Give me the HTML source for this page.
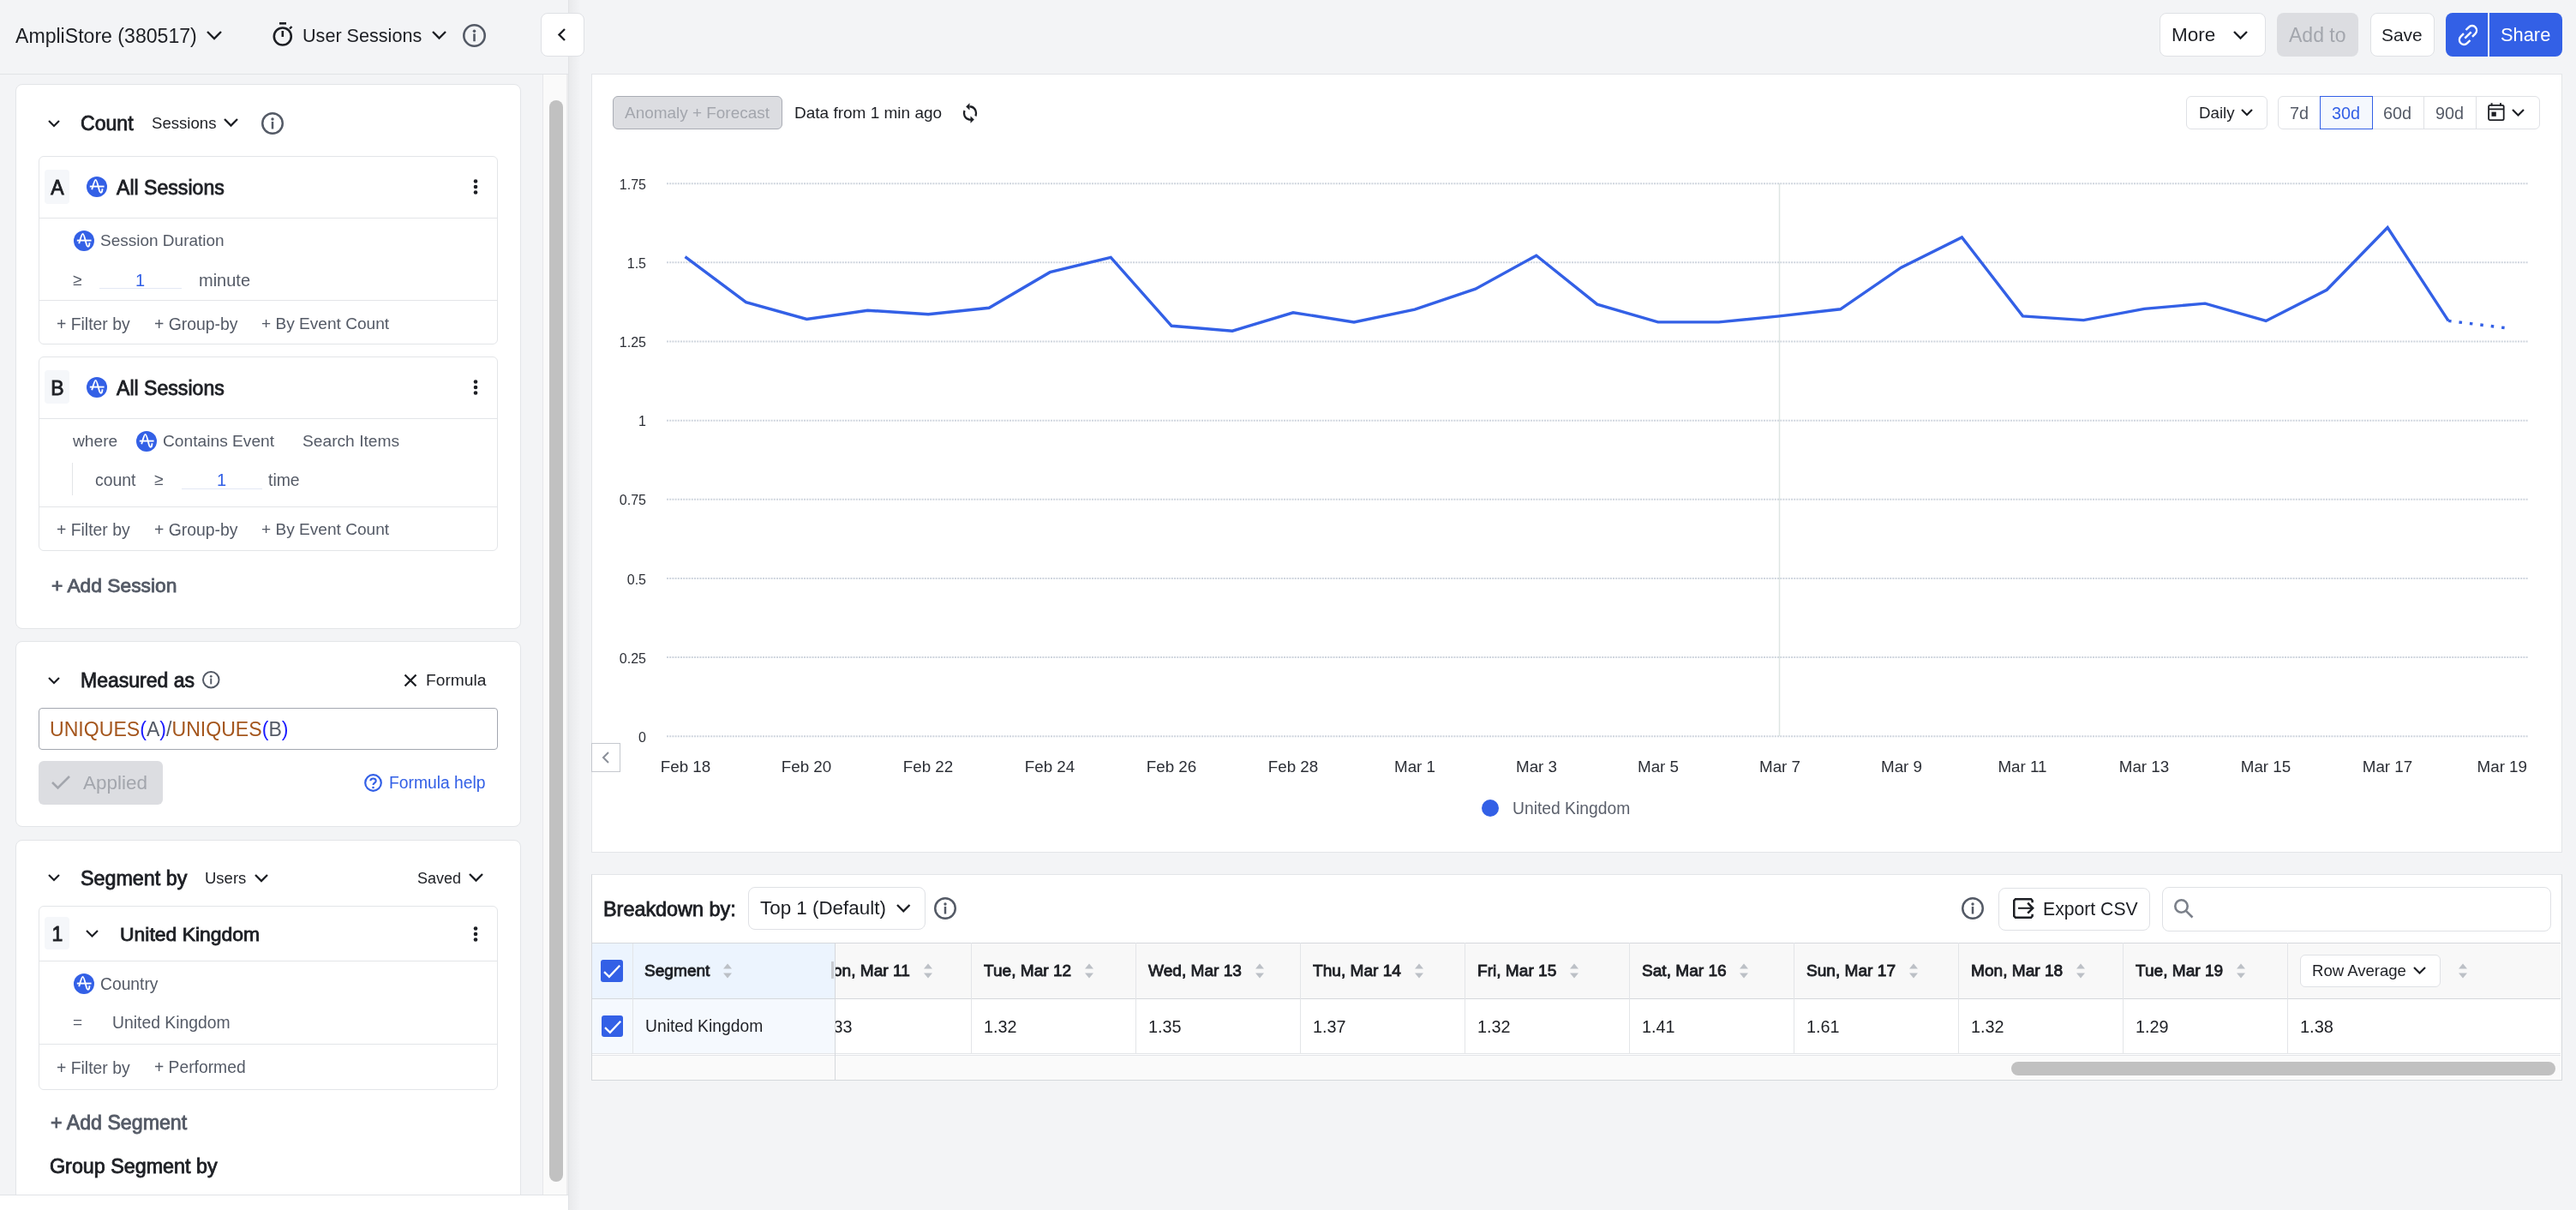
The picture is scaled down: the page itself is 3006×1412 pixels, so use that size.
<!DOCTYPE html>
<html><head><meta charset="utf-8">
<style>
html,body{margin:0;padding:0;}
body{width:3006px;height:1412px;overflow:hidden;background:#f3f4f6;font-family:"Liberation Sans",sans-serif;color:#1d1f24;position:relative;}
.a{position:absolute;}
.t{position:absolute;white-space:nowrap;line-height:40px;height:40px;will-change:transform;}
.ic{position:absolute;overflow:visible;}
</style></head><body>
<div class="a" style="left:0px;top:86px;width:663px;height:1px;background:#e1e3e6"></div>
<div class="t" style="left:18px;top:21.7px;font-size:23.1px;color:#1d1f24;">AmpliStore (380517)</div>
<svg class="ic" style="left:240px;top:35.0px" width="20" height="12.0" viewBox="0 0 20 12.0"><path d="M2 2 L10.0 10.0 L18 2" fill="none" stroke="#1d1f24" stroke-width="2.4" stroke-linecap="butt"/></svg>
<svg class="ic" style="left:318px;top:26px" width="25" height="29" viewBox="0 0 25 29"><rect x="8" y="0" width="8" height="2.6" fill="#1d1f24"/><circle cx="11.8" cy="16.5" r="10" fill="none" stroke="#1d1f24" stroke-width="2.6"/><path d="M11.8 10 V17" stroke="#1d1f24" stroke-width="2.6"/><path d="M20 7.5 L22.5 5" stroke="#1d1f24" stroke-width="2.4"/></svg>
<div class="t" style="left:353px;top:21.7px;font-size:21.6px;color:#1d1f24;">User Sessions</div>
<svg class="ic" style="left:503px;top:35.25px" width="19" height="11.5" viewBox="0 0 19 11.5"><path d="M2 2 L9.5 9.5 L17 2" fill="none" stroke="#1d1f24" stroke-width="2.4" stroke-linecap="butt"/></svg>
<svg class="ic" style="left:540px;top:27.5px" width="27" height="27" viewBox="0 0 27 27"><circle cx="13.5" cy="13.5" r="12.2175" fill="none" stroke="#545a66" stroke-width="2.565"/><circle cx="13.5" cy="8.37" r="1.7550000000000001" fill="#545a66"/><rect x="12.2175" y="11.34" width="2.565" height="8.91" fill="#545a66"/></svg>
<div class="a" style="left:633px;top:87px;width:30px;height:1307px;background:#fafafa;border-left:1px solid #e6e7ea;border-right:2px solid #ececee;box-sizing:border-box"></div>
<div class="a" style="left:641px;top:117px;width:16px;height:1262px;background:#c1c1c1;border-radius:8px"></div>
<div class="a" style="left:663px;top:0px;width:1px;height:1412px;background:#e1e3e6"></div>
<div class="a" style="left:664px;top:0;width:14px;height:1412px;background:linear-gradient(to right,rgba(0,0,0,0.045),rgba(0,0,0,0))"></div>
<div class="a" style="left:631px;top:15px;width:51px;height:51px;background:#fff;border:1px solid #dfe1e5;border-radius:8px;box-sizing:border-box;"></div>
<svg class="ic" style="left:648px;top:32px" width="16" height="18" viewBox="0 0 16 18"><path d="M11 2 L4.5 8.5 L11 15" fill="none" stroke="#1d1f24" stroke-width="2.4"/></svg>
<div class="a" style="left:18px;top:98px;width:590px;height:636px;background:#fff;border:1px solid #e3e5e8;border-radius:8px;box-sizing:border-box;"></div>
<svg class="ic" style="left:55px;top:138.5px" width="16" height="10.0" viewBox="0 0 16 10.0"><path d="M2 2 L8.0 8.0 L14 2" fill="none" stroke="#1d1f24" stroke-width="2.2" stroke-linecap="butt"/></svg>
<div class="t" style="left:94px;top:123.7px;font-size:23.1px;-webkit-text-stroke:0.85px #1d1f24;color:#1d1f24;">Count</div>
<div class="t" style="left:177px;top:123.7px;font-size:18.6px;color:#1d1f24;">Sessions</div>
<svg class="ic" style="left:260px;top:137.25px" width="19" height="11.5" viewBox="0 0 19 11.5"><path d="M2 2 L9.5 9.5 L17 2" fill="none" stroke="#1d1f24" stroke-width="2.4" stroke-linecap="butt"/></svg>
<svg class="ic" style="left:305px;top:131.0px" width="26" height="26" viewBox="0 0 26 26"><circle cx="13.0" cy="13.0" r="11.765" fill="none" stroke="#545a66" stroke-width="2.47"/><circle cx="13.0" cy="8.06" r="1.69" fill="#545a66"/><rect x="11.765" y="10.92" width="2.47" height="8.58" fill="#545a66"/></svg>
<div class="a" style="left:45px;top:182px;width:536px;height:220px;background:#fff;border:1px solid #e3e5e8;border-radius:6px;box-sizing:border-box;"></div>
<div class="a" style="left:52px;top:198px;width:29px;height:40px;background:#f5f7fa;border-radius:4px;box-sizing:border-box;"></div>
<div class="t" style="left:-83.5px;width:300px;text-align:center;top:198.7px;font-size:23px;-webkit-text-stroke:0.85px #1d1f24;color:#1d1f24;">A</div>
<svg class="ic" style="left:101px;top:206.0px" width="24" height="24" viewBox="0 0 24 24"><circle cx="12.0" cy="12.0" r="12.0" fill="#3360e6"/><g transform="scale(1.0)" fill="none" stroke="#fff" stroke-width="1.9" stroke-linecap="butt" stroke-linejoin="round"><path d="M6.2 15.2 C7.6 11 9.2 3.9 10.6 3.9 C12.1 3.9 13.6 12 15 16.5 C15.7 18.7 17.2 19.6 18 17.4 L18.6 14.2"/><path d="M3.8 11.6 H20.6"/></g></svg>
<div class="t" style="left:136px;top:198.7px;font-size:23.1px;-webkit-text-stroke:0.85px #1d1f24;color:#1d1f24;">All Sessions</div>
<svg class="ic" style="left:552px;top:209px" width="6" height="18" viewBox="0 0 6 18"><circle cx="3" cy="2.5" r="2.3" fill="#1d1f24"/><circle cx="3" cy="9" r="2.3" fill="#1d1f24"/><circle cx="3" cy="15.5" r="2.3" fill="#1d1f24"/></svg>
<div class="a" style="left:46px;top:254px;width:534px;height:1px;background:#e3e5e8"></div>
<svg class="ic" style="left:86px;top:268.5px" width="24" height="24" viewBox="0 0 24 24"><circle cx="12.0" cy="12.0" r="12.0" fill="#3360e6"/><g transform="scale(1.0)" fill="none" stroke="#fff" stroke-width="1.9" stroke-linecap="butt" stroke-linejoin="round"><path d="M6.2 15.2 C7.6 11 9.2 3.9 10.6 3.9 C12.1 3.9 13.6 12 15 16.5 C15.7 18.7 17.2 19.6 18 17.4 L18.6 14.2"/><path d="M3.8 11.6 H20.6"/></g></svg>
<div class="t" style="left:117px;top:261.2px;font-size:19px;color:#545a66;">Session Duration</div>
<div class="t" style="left:85px;top:306.7px;font-size:19px;color:#545a66;">≥</div>
<div class="t" style="left:158px;top:306.7px;font-size:20px;color:#3360e6;">1</div>
<div class="a" style="left:116px;top:336px;width:96px;height:1px;background:#e3e8f4"></div>
<div class="t" style="left:232px;top:306.7px;font-size:20px;color:#545a66;">minute</div>
<div class="a" style="left:46px;top:350px;width:534px;height:1px;background:#e3e5e8"></div>
<div class="t" style="left:66px;top:358.2px;font-size:19.4px;color:#545a66;">+ Filter by</div>
<div class="t" style="left:180px;top:358.2px;font-size:19.4px;color:#545a66;">+ Group-by</div>
<div class="t" style="left:305.4px;top:358.2px;font-size:19.1px;color:#545a66;">+ By Event Count</div>
<div class="a" style="left:45px;top:416px;width:536px;height:227px;background:#fff;border:1px solid #e3e5e8;border-radius:6px;box-sizing:border-box;"></div>
<div class="a" style="left:52px;top:432px;width:29px;height:39px;background:#f5f7fa;border-radius:4px;box-sizing:border-box;"></div>
<div class="t" style="left:-83.5px;width:300px;text-align:center;top:432.7px;font-size:23px;-webkit-text-stroke:0.85px #1d1f24;color:#1d1f24;">B</div>
<svg class="ic" style="left:101px;top:440.0px" width="24" height="24" viewBox="0 0 24 24"><circle cx="12.0" cy="12.0" r="12.0" fill="#3360e6"/><g transform="scale(1.0)" fill="none" stroke="#fff" stroke-width="1.9" stroke-linecap="butt" stroke-linejoin="round"><path d="M6.2 15.2 C7.6 11 9.2 3.9 10.6 3.9 C12.1 3.9 13.6 12 15 16.5 C15.7 18.7 17.2 19.6 18 17.4 L18.6 14.2"/><path d="M3.8 11.6 H20.6"/></g></svg>
<div class="t" style="left:136px;top:432.7px;font-size:23.1px;-webkit-text-stroke:0.85px #1d1f24;color:#1d1f24;">All Sessions</div>
<svg class="ic" style="left:552px;top:443px" width="6" height="18" viewBox="0 0 6 18"><circle cx="3" cy="2.5" r="2.3" fill="#1d1f24"/><circle cx="3" cy="9" r="2.3" fill="#1d1f24"/><circle cx="3" cy="15.5" r="2.3" fill="#1d1f24"/></svg>
<div class="a" style="left:46px;top:488px;width:534px;height:1px;background:#e3e5e8"></div>
<div class="t" style="left:84.7px;top:495.3px;font-size:19.2px;color:#545a66;">where</div>
<svg class="ic" style="left:159px;top:502.6px" width="24" height="24" viewBox="0 0 24 24"><circle cx="12.0" cy="12.0" r="12.0" fill="#3360e6"/><g transform="scale(1.0)" fill="none" stroke="#fff" stroke-width="1.9" stroke-linecap="butt" stroke-linejoin="round"><path d="M6.2 15.2 C7.6 11 9.2 3.9 10.6 3.9 C12.1 3.9 13.6 12 15 16.5 C15.7 18.7 17.2 19.6 18 17.4 L18.6 14.2"/><path d="M3.8 11.6 H20.6"/></g></svg>
<div class="t" style="left:190.3px;top:495.3px;font-size:19.2px;color:#545a66;">Contains Event</div>
<div class="t" style="left:353.3px;top:495.3px;font-size:19.2px;color:#545a66;">Search Items</div>
<div class="a" style="left:84px;top:540px;width:1px;height:38px;background:#e3e5e8"></div>
<div class="t" style="left:110.6px;top:540.2px;font-size:19.4px;color:#545a66;">count</div>
<div class="t" style="left:180px;top:540.2px;font-size:19px;color:#545a66;">≥</div>
<div class="t" style="left:253px;top:540.2px;font-size:20px;color:#3360e6;">1</div>
<div class="a" style="left:212px;top:570px;width:94px;height:1px;background:#e3e8f4"></div>
<div class="t" style="left:313.4px;top:540.2px;font-size:19.4px;color:#545a66;">time</div>
<div class="a" style="left:46px;top:591px;width:534px;height:1px;background:#e3e5e8"></div>
<div class="t" style="left:66px;top:598.4px;font-size:19.4px;color:#545a66;">+ Filter by</div>
<div class="t" style="left:180px;top:598.4px;font-size:19.4px;color:#545a66;">+ Group-by</div>
<div class="t" style="left:305.4px;top:598.4px;font-size:19.1px;color:#545a66;">+ By Event Count</div>
<div class="t" style="left:59.5px;top:663.0px;font-size:22.8px;-webkit-text-stroke:0.85px #545a66;color:#545a66;">+ Add Session</div>
<div class="a" style="left:18px;top:748px;width:590px;height:217px;background:#fff;border:1px solid #e3e5e8;border-radius:8px;box-sizing:border-box;"></div>
<svg class="ic" style="left:55px;top:788.5px" width="16" height="10.0" viewBox="0 0 16 10.0"><path d="M2 2 L8.0 8.0 L14 2" fill="none" stroke="#1d1f24" stroke-width="2.2" stroke-linecap="butt"/></svg>
<div class="t" style="left:93.8px;top:774.2px;font-size:23.0px;-webkit-text-stroke:0.85px #1d1f24;color:#1d1f24;">Measured as</div>
<svg class="ic" style="left:236.4px;top:783.25px" width="20.5" height="20.5" viewBox="0 0 20.5 20.5"><circle cx="10.25" cy="10.25" r="9.27625" fill="none" stroke="#545a66" stroke-width="1.9475"/><circle cx="10.25" cy="6.3549999999999995" r="1.3325" fill="#545a66"/><rect x="9.27625" y="8.61" width="1.9475" height="6.765000000000001" fill="#545a66"/></svg>
<svg class="ic" style="left:471px;top:786px" width="16" height="16" viewBox="0 0 16 16"><path d="M1.5 1.5 L14.5 14.5 M14.5 1.5 L1.5 14.5" stroke="#1d1f24" stroke-width="2.3"/></svg>
<div class="t" style="left:496.7px;top:774.2px;font-size:19.2px;color:#1d1f24;">Formula</div>
<div class="a" style="left:45px;top:825.5px;width:536px;height:49.0px;background:#fff;border:1px solid #a3a7b0;border-radius:4px;box-sizing:border-box;"></div>
<div class="t" style="left:58.4px;top:831.3px;font-size:23.1px;color:#1d1f24;"><span style="color:#a4561d">UNIQUES</span><span style="color:#1a1aff">(</span><span style="color:#545a66">A</span><span style="color:#1a1aff">)</span><span style="color:#545a66">/</span><span style="color:#a4561d">UNIQUES</span><span style="color:#1a1aff">(</span><span style="color:#545a66">B</span><span style="color:#1a1aff">)</span></div>
<div class="a" style="left:45px;top:888px;width:145px;height:51px;background:#dcdde1;border-radius:6px;box-sizing:border-box;"></div>
<svg class="ic" style="left:59px;top:904px" width="24" height="18" viewBox="0 0 24 18"><path d="M2 9 L8.5 15.5 L22 2" fill="none" stroke="#a3a6ad" stroke-width="2.6"/></svg>
<div class="t" style="left:97px;top:894.2px;font-size:22.5px;color:#a3a6ad;">Applied</div>
<svg class="ic" style="left:425px;top:903px" width="21" height="21" viewBox="0 0 21 21"><circle cx="10.5" cy="10.5" r="9.3" fill="none" stroke="#3360e6" stroke-width="2.2"/><path d="M7.3 8.3 C7.3 4.6 13.7 4.6 13.7 8.3 C13.7 10.6 10.5 10.8 10.5 13" fill="none" stroke="#3360e6" stroke-width="2.1"/><circle cx="10.5" cy="16" r="1.3" fill="#3360e6"/></svg>
<div class="t" style="left:454.3px;top:894.2px;font-size:19.3px;color:#3360e6;">Formula help</div>
<div class="a" style="left:18px;top:980px;width:590px;height:440px;background:#fff;border:1px solid #e3e5e8;border-radius:8px;box-sizing:border-box;"></div>
<svg class="ic" style="left:55px;top:1019.0px" width="16" height="10.0" viewBox="0 0 16 10.0"><path d="M2 2 L8.0 8.0 L14 2" fill="none" stroke="#1d1f24" stroke-width="2.2" stroke-linecap="butt"/></svg>
<div class="t" style="left:94px;top:1004.7px;font-size:23.3px;-webkit-text-stroke:0.85px #1d1f24;color:#1d1f24;">Segment by</div>
<div class="t" style="left:239.3px;top:1004.7px;font-size:18.5px;color:#1d1f24;">Users</div>
<svg class="ic" style="left:296px;top:1018.5px" width="18" height="11.0" viewBox="0 0 18 11.0"><path d="M2 2 L9.0 9.0 L16 2" fill="none" stroke="#1d1f24" stroke-width="2.4" stroke-linecap="butt"/></svg>
<div class="t" style="left:486.7px;top:1004.7px;font-size:18px;color:#1d1f24;">Saved</div>
<svg class="ic" style="left:546px;top:1018.25px" width="19" height="11.5" viewBox="0 0 19 11.5"><path d="M2 2 L9.5 9.5 L17 2" fill="none" stroke="#1d1f24" stroke-width="2.4" stroke-linecap="butt"/></svg>
<div class="a" style="left:45px;top:1056.5px;width:536px;height:215.5px;background:#fff;border:1px solid #e3e5e8;border-radius:6px;box-sizing:border-box;"></div>
<div class="a" style="left:52px;top:1069.5px;width:29px;height:38.5px;background:#f5f7fa;border-radius:4px;box-sizing:border-box;"></div>
<div class="t" style="left:-83.5px;width:300px;text-align:center;top:1070.2px;font-size:23px;-webkit-text-stroke:0.85px #1d1f24;color:#1d1f24;">1</div>
<svg class="ic" style="left:99px;top:1084.25px" width="17" height="10.5" viewBox="0 0 17 10.5"><path d="M2 2 L8.5 8.5 L15 2" fill="none" stroke="#1d1f24" stroke-width="2.2" stroke-linecap="butt"/></svg>
<div class="t" style="left:140px;top:1070.2px;font-size:22.95px;-webkit-text-stroke:0.85px #1d1f24;color:#1d1f24;">United Kingdom</div>
<svg class="ic" style="left:551.6px;top:1080.5px" width="6" height="18" viewBox="0 0 6 18"><circle cx="3" cy="2.5" r="2.3" fill="#1d1f24"/><circle cx="3" cy="9" r="2.3" fill="#1d1f24"/><circle cx="3" cy="15.5" r="2.3" fill="#1d1f24"/></svg>
<div class="a" style="left:46px;top:1121px;width:534px;height:1px;background:#e3e5e8"></div>
<svg class="ic" style="left:86px;top:1136.0px" width="24" height="24" viewBox="0 0 24 24"><circle cx="12.0" cy="12.0" r="12.0" fill="#3360e6"/><g transform="scale(1.0)" fill="none" stroke="#fff" stroke-width="1.9" stroke-linecap="butt" stroke-linejoin="round"><path d="M6.2 15.2 C7.6 11 9.2 3.9 10.6 3.9 C12.1 3.9 13.6 12 15 16.5 C15.7 18.7 17.2 19.6 18 17.4 L18.6 14.2"/><path d="M3.8 11.6 H20.6"/></g></svg>
<div class="t" style="left:117px;top:1128.7px;font-size:19.3px;color:#545a66;">Country</div>
<div class="t" style="left:85px;top:1172.7px;font-size:19px;color:#545a66;">=</div>
<div class="t" style="left:130.8px;top:1172.7px;font-size:19.35px;color:#545a66;">United Kingdom</div>
<div class="a" style="left:46px;top:1218px;width:534px;height:1px;background:#e3e5e8"></div>
<div class="t" style="left:65.8px;top:1225.7px;font-size:19.4px;color:#545a66;">+ Filter by</div>
<div class="t" style="left:180px;top:1225.7px;font-size:19.3px;color:#545a66;">+ Performed</div>
<div class="t" style="left:58.5px;top:1289.7px;font-size:23.2px;-webkit-text-stroke:0.85px #545a66;color:#545a66;">+ Add Segment</div>
<div class="t" style="left:57.7px;top:1340.7px;font-size:23.3px;-webkit-text-stroke:0.85px #1d1f24;color:#1d1f24;">Group Segment by</div>
<div class="a" style="left:0;top:1394px;width:663px;height:18px;background:#fff;border-top:1px solid #e1e3e6;box-sizing:border-box"></div>
<div class="a" style="left:2519.5px;top:15px;width:124.0px;height:50.5px;background:#fff;border:1px solid #dfe1e5;border-radius:8px;box-sizing:border-box;"></div>
<div class="t" style="left:2533.7px;top:21.0px;font-size:22.5px;color:#1d1f24;">More</div>
<svg class="ic" style="left:2605px;top:35.25px" width="19" height="11.5" viewBox="0 0 19 11.5"><path d="M2 2 L9.5 9.5 L17 2" fill="none" stroke="#1d1f24" stroke-width="2.4" stroke-linecap="butt"/></svg>
<div class="a" style="left:2657px;top:15px;width:95px;height:50.5px;background:#dcdde1;border-radius:8px;box-sizing:border-box;"></div>
<div class="t" style="left:2671px;top:21.0px;font-size:23px;color:#a3a6ad;">Add to</div>
<div class="a" style="left:2765.5px;top:15px;width:75.0px;height:50.5px;background:#fff;border:1px solid #dfe1e5;border-radius:8px;box-sizing:border-box;"></div>
<div class="t" style="left:2779px;top:21.0px;font-size:20.9px;color:#1d1f24;">Save</div>
<div class="a" style="left:2854px;top:15px;width:136px;height:50.5px;background:#3360e6;border-radius:8px;box-sizing:border-box;"></div>
<div class="a" style="left:2903px;top:15px;width:2px;height:50.5px;background:#e8ebf5"></div>
<svg class="ic" style="left:2868px;top:29px" width="24" height="24" viewBox="0 0 24 24"><g fill="none" stroke="#fff" stroke-width="2.4"><path d="M9.5 6 L13 2.6 C15.2 0.4 18.6 0.6 20.6 2.8 C22.6 5 22.5 8.2 20.5 10.3 L17 13.8"/><path d="M14.5 18 L11 21.4 C8.8 23.6 5.4 23.4 3.4 21.2 C1.4 19 1.5 15.8 3.5 13.7 L7 10.2"/><path d="M8.3 15.7 L15.7 8.3"/></g></svg>
<div class="t" style="left:2918.4px;top:21.0px;font-size:21.85px;color:#fff;">Share</div>
<div class="a" style="left:690px;top:86px;width:2300px;height:909px;background:#fff;border:1px solid #e3e5e8;box-sizing:border-box"></div>
<div class="a" style="left:715px;top:112px;width:198px;height:39px;background:#dcdde1;border:1px solid #a9acb4;border-radius:6px;box-sizing:border-box;"></div>
<div class="t" style="left:729px;top:111.7px;font-size:18.95px;color:#a3a6ad;">Anomaly + Forecast</div>
<div class="t" style="left:926.5px;top:111.7px;font-size:19px;color:#1d1f24;">Data from 1 min ago</div>
<svg class="ic" style="left:1121px;top:119px" width="22" height="26" viewBox="0 0 22 26"><g fill="none" stroke="#1d1f24" stroke-width="2.3"><path d="M4.5 10 C3 14 4.5 19.5 10 20.5 L12 20.6"/><path d="M17.5 16.5 C19 12.5 17.5 6.5 12 5.5 L10.5 5.4"/></g><path d="M10.5 1.2 L6.2 5.4 L10.5 9.6 Z" fill="#1d1f24"/><path d="M11.5 16.4 L15.8 20.6 L11.5 24.8 Z" fill="#1d1f24"/></svg>
<div class="a" style="left:2551px;top:112px;width:95px;height:39px;background:#fff;border:1px solid #dfe1e5;border-radius:6px;box-sizing:border-box;"></div>
<div class="t" style="left:2566px;top:111.7px;font-size:18.7px;color:#1d1f24;">Daily</div>
<svg class="ic" style="left:2614px;top:126.0px" width="16" height="10.0" viewBox="0 0 16 10.0"><path d="M2 2 L8.0 8.0 L14 2" fill="none" stroke="#1d1f24" stroke-width="2.2" stroke-linecap="butt"/></svg>
<div class="a" style="left:2658px;top:112px;width:306px;height:39px;background:#fff;border:1px solid #dfe1e5;border-radius:6px;box-sizing:border-box;"></div>
<div class="a" style="left:2828px;top:113px;width:1px;height:37px;background:#dfe1e5"></div>
<div class="a" style="left:2888.5px;top:113px;width:1px;height:37px;background:#dfe1e5"></div>
<div class="a" style="left:2707px;top:112px;width:62px;height:39px;background:#f5f8fd;border:1px solid #3360e6;border-radius:0px;box-sizing:border-box;"></div>
<div class="t" style="left:2672px;top:111.7px;font-size:19.8px;color:#545a66;">7d</div>
<div class="t" style="left:2721px;top:111.7px;font-size:19.8px;color:#3360e6;">30d</div>
<div class="t" style="left:2781px;top:111.7px;font-size:19.8px;color:#545a66;">60d</div>
<div class="t" style="left:2841.8px;top:111.7px;font-size:19.8px;color:#545a66;">90d</div>
<svg class="ic" style="left:2903px;top:120px" width="20" height="22" viewBox="0 0 20 22"><g fill="none" stroke="#1d1f24"><rect x="1.1" y="2.8" width="17.6" height="17.4" rx="1.6" stroke-width="1.8"/><path d="M1 7.4 H19" stroke-width="1.8"/><path d="M4.6 0.3 V3.5 M15 0.3 V3.5" stroke-width="2"/></g><rect x="4.5" y="10.6" width="5.3" height="5.2" fill="#1d1f24"/></svg>
<svg class="ic" style="left:2930px;top:125.75px" width="17" height="10.5" viewBox="0 0 17 10.5"><path d="M2 2 L8.5 8.5 L15 2" fill="none" stroke="#1d1f24" stroke-width="2.2" stroke-linecap="butt"/></svg>
<div class="t" style="left:454px;width:300px;text-align:right;top:195.7px;font-size:16px;color:#2c2f36;">1.75</div>
<div class="t" style="left:454px;width:300px;text-align:right;top:287.9px;font-size:16px;color:#2c2f36;">1.5</div>
<div class="t" style="left:454px;width:300px;text-align:right;top:380.0px;font-size:16px;color:#2c2f36;">1.25</div>
<div class="t" style="left:454px;width:300px;text-align:right;top:472.2px;font-size:16px;color:#2c2f36;">1</div>
<div class="t" style="left:454px;width:300px;text-align:right;top:564.3px;font-size:16px;color:#2c2f36;">0.75</div>
<div class="t" style="left:454px;width:300px;text-align:right;top:656.5px;font-size:16px;color:#2c2f36;">0.5</div>
<div class="t" style="left:454px;width:300px;text-align:right;top:748.6px;font-size:16px;color:#2c2f36;">0.25</div>
<div class="t" style="left:454px;width:300px;text-align:right;top:840.7px;font-size:16px;color:#2c2f36;">0</div>
<svg class="ic" style="left:0;top:0" width="3006" height="1000" viewBox="0 0 3006 1000"><line x1="778" y1="214.20" x2="2950" y2="214.20" stroke="#cfd5de" stroke-width="2" stroke-dasharray="2 1.2"/><line x1="778" y1="306.35" x2="2950" y2="306.35" stroke="#cfd5de" stroke-width="2" stroke-dasharray="2 1.2"/><line x1="778" y1="398.50" x2="2950" y2="398.50" stroke="#cfd5de" stroke-width="2" stroke-dasharray="2 1.2"/><line x1="778" y1="490.65" x2="2950" y2="490.65" stroke="#cfd5de" stroke-width="2" stroke-dasharray="2 1.2"/><line x1="778" y1="582.80" x2="2950" y2="582.80" stroke="#cfd5de" stroke-width="2" stroke-dasharray="2 1.2"/><line x1="778" y1="674.95" x2="2950" y2="674.95" stroke="#cfd5de" stroke-width="2" stroke-dasharray="2 1.2"/><line x1="778" y1="767.10" x2="2950" y2="767.10" stroke="#cfd5de" stroke-width="2" stroke-dasharray="2 1.2"/><line x1="778" y1="859.25" x2="2950" y2="859.25" stroke="#cfd5de" stroke-width="2" stroke-dasharray="2 1.2"/><line x1="2076.5" y1="214" x2="2076.5" y2="859" stroke="#dde5e3" stroke-width="1.5"/><polyline points="799.5,299.7 870.5,352.7 941.4,372.5 1012.4,362.2 1083.3,366.7 1154.2,359.3 1225.2,317.7 1296.2,300.4 1367.1,380.3 1438.1,386.2 1509.0,364.8 1580.0,375.9 1650.9,361.1 1721.8,337.2 1792.8,298.2 1863.8,355.2 1934.7,375.9 2005.7,375.9 2076.6,368.9 2147.6,360.8 2218.5,312.2 2289.4,276.9 2360.4,368.9 2431.4,373.6 2502.3,360.4 2573.2,354.1 2644.2,374.4 2715.2,338.3 2786.1,265.5 2857.1,374.4" fill="none" stroke="#3360e6" stroke-width="3.4" stroke-linejoin="miter"/><polyline points="2857.1,374.4 2928.0,383.2" fill="none" stroke="#3360e6" stroke-width="3.4" stroke-dasharray="3.5 9"/></svg>
<div class="t" style="left:649.5px;width:300px;text-align:center;top:874.7px;font-size:18.8px;color:#2c2f36;">Feb 18</div>
<div class="t" style="left:791.4px;width:300px;text-align:center;top:874.7px;font-size:18.8px;color:#2c2f36;">Feb 20</div>
<div class="t" style="left:933.3px;width:300px;text-align:center;top:874.7px;font-size:18.8px;color:#2c2f36;">Feb 22</div>
<div class="t" style="left:1075.2px;width:300px;text-align:center;top:874.7px;font-size:18.8px;color:#2c2f36;">Feb 24</div>
<div class="t" style="left:1217.1px;width:300px;text-align:center;top:874.7px;font-size:18.8px;color:#2c2f36;">Feb 26</div>
<div class="t" style="left:1359.0px;width:300px;text-align:center;top:874.7px;font-size:18.8px;color:#2c2f36;">Feb 28</div>
<div class="t" style="left:1500.9px;width:300px;text-align:center;top:874.7px;font-size:18.8px;color:#2c2f36;">Mar 1</div>
<div class="t" style="left:1642.8000000000002px;width:300px;text-align:center;top:874.7px;font-size:18.8px;color:#2c2f36;">Mar 3</div>
<div class="t" style="left:1784.7px;width:300px;text-align:center;top:874.7px;font-size:18.8px;color:#2c2f36;">Mar 5</div>
<div class="t" style="left:1926.6000000000004px;width:300px;text-align:center;top:874.7px;font-size:18.8px;color:#2c2f36;">Mar 7</div>
<div class="t" style="left:2068.5px;width:300px;text-align:center;top:874.7px;font-size:18.8px;color:#2c2f36;">Mar 9</div>
<div class="t" style="left:2210.4px;width:300px;text-align:center;top:874.7px;font-size:18.8px;color:#2c2f36;">Mar 11</div>
<div class="t" style="left:2352.3px;width:300px;text-align:center;top:874.7px;font-size:18.8px;color:#2c2f36;">Mar 13</div>
<div class="t" style="left:2494.2px;width:300px;text-align:center;top:874.7px;font-size:18.8px;color:#2c2f36;">Mar 15</div>
<div class="t" style="left:2636.1000000000004px;width:300px;text-align:center;top:874.7px;font-size:18.8px;color:#2c2f36;">Mar 17</div>
<div class="t" style="left:2649px;width:300px;text-align:right;top:874.7px;font-size:18.8px;color:#2c2f36;">Mar 19</div>
<div class="a" style="left:690px;top:867px;width:34px;height:34px;background:#fff;border:1px solid #c5c8ce;border-radius:0px;box-sizing:border-box;"></div>
<svg class="ic" style="left:700px;top:876px" width="14" height="16" viewBox="0 0 14 16"><path d="M10 2 L4 8 L10 14" fill="none" stroke="#8a8f99" stroke-width="2"/></svg>
<svg class="ic" style="left:1729px;top:933px" width="20" height="20" viewBox="0 0 20 20"><circle cx="10" cy="10" r="10" fill="#3360e6"/></svg>
<div class="t" style="left:1765px;top:923.7px;font-size:19.3px;color:#5a5f6b;">United Kingdom</div>
<div class="a" style="left:690px;top:1020px;width:2300px;height:241px;background:#fff;border:1px solid #e3e5e8;border-right-color:#d5d8dc;border-bottom-color:#d5d8dc;border-left-color:#d5d8dc;box-sizing:border-box"></div>
<div class="t" style="left:704px;top:1040.7px;font-size:23.4px;-webkit-text-stroke:0.85px #1d1f24;color:#1d1f24;">Breakdown by:</div>
<div class="a" style="left:872.5px;top:1034.5px;width:207.5px;height:50.0px;background:#fff;border:1px solid #dfe1e5;border-radius:8px;box-sizing:border-box;"></div>
<div class="t" style="left:886.5px;top:1040.2px;font-size:22.4px;color:#1d1f24;">Top 1 (Default)</div>
<svg class="ic" style="left:1045px;top:1053.875px" width="18.5" height="11.25" viewBox="0 0 18.5 11.25"><path d="M2 2 L9.25 9.25 L16.5 2" fill="none" stroke="#1d1f24" stroke-width="2.4" stroke-linecap="butt"/></svg>
<svg class="ic" style="left:1090px;top:1047.0px" width="26" height="26" viewBox="0 0 26 26"><circle cx="13.0" cy="13.0" r="11.765" fill="none" stroke="#545a66" stroke-width="2.47"/><circle cx="13.0" cy="8.06" r="1.69" fill="#545a66"/><rect x="11.765" y="10.92" width="2.47" height="8.58" fill="#545a66"/></svg>
<svg class="ic" style="left:2289px;top:1047.0px" width="26" height="26" viewBox="0 0 26 26"><circle cx="13.0" cy="13.0" r="11.765" fill="none" stroke="#545a66" stroke-width="2.47"/><circle cx="13.0" cy="8.06" r="1.69" fill="#545a66"/><rect x="11.765" y="10.92" width="2.47" height="8.58" fill="#545a66"/></svg>
<div class="a" style="left:2331.5px;top:1035.5px;width:177.0px;height:50.0px;background:#fff;border:1px solid #dfe1e5;border-radius:8px;box-sizing:border-box;"></div>
<svg class="ic" style="left:2349px;top:1048px" width="25" height="25" viewBox="0 0 25 25"><g fill="none" stroke="#1d1f24"><path d="M22.6 5.2 V2.9 L21.1 1.25 H2.9 L1.25 2.9 V21.1 L2.9 22.75 H21.1 L22.6 21.1 V18.8" stroke-width="2.5"/><path d="M6 11.8 H22.5" stroke-width="2"/><path d="M17.2 5.7 L23.1 11.8 L17.2 17.7" stroke-width="2.6"/></g></svg>
<div class="t" style="left:2384.4px;top:1040.7px;font-size:21.2px;color:#1d1f24;">Export CSV</div>
<div class="a" style="left:2522.5px;top:1034.5px;width:454.0px;height:52.0px;background:#fff;border:1px solid #dfe1e5;border-radius:8px;box-sizing:border-box;"></div>
<svg class="ic" style="left:2536px;top:1048px" width="25" height="25" viewBox="0 0 25 25"><g fill="none" stroke="#7b808a" stroke-width="2.6"><circle cx="9.5" cy="9.5" r="7.2"/><path d="M14.8 14.8 L22.5 22.5"/></g></svg>
<div class="a" style="left:691px;top:1100px;width:2297px;height:65px;background:#f8f8f8"></div>
<div class="a" style="left:691px;top:1100px;width:2297px;height:1px;background:#d5d8dc"></div>
<div class="a" style="left:691px;top:1165px;width:2297px;height:1px;background:#d5d8dc"></div>
<div class="a" style="left:691px;top:1229px;width:2297px;height:1px;background:#e3e5e8"></div>
<div class="a" style="left:691px;top:1231px;width:2297px;height:1px;background:#e3e5e8"></div>
<div class="a" style="left:691px;top:1232px;width:2297px;height:28px;background:#fafafa"></div>
<div class="a" style="left:2347px;top:1239px;width:635px;height:16px;background:#c1c1c1;border-radius:8px"></div>
<div class="t" style="left:956.4px;top:1113.2px;font-size:19.1px;-webkit-text-stroke:0.85px #1d1f24;color:#1d1f24;">Mon, Mar 11</div>
<svg class="ic" style="left:1076.7125px;top:1121.5px" width="12" height="22" viewBox="0 0 12 22"><path d="M1 8.5 L6 2.5 L11 8.5 Z" fill="#bcc0c6"/><path d="M1 13.5 L6 19.5 L11 13.5 Z" fill="#bcc0c6"/></svg>
<div class="t" style="left:956.4px;top:1177.7px;font-size:19.8px;color:#1d1f24;">1.33</div>
<div class="a" style="left:1133px;top:1165px;width:1px;height:64px;background:#e3e5e8"></div>
<div class="a" style="left:1133px;top:1100px;width:1px;height:65px;background:#e3e5e8"></div>
<div class="t" style="left:1148.35px;top:1113.2px;font-size:19.1px;-webkit-text-stroke:0.85px #1d1f24;color:#1d1f24;">Tue, Mar 12</div>
<svg class="ic" style="left:1265.13125px;top:1121.5px" width="12" height="22" viewBox="0 0 12 22"><path d="M1 8.5 L6 2.5 L11 8.5 Z" fill="#bcc0c6"/><path d="M1 13.5 L6 19.5 L11 13.5 Z" fill="#bcc0c6"/></svg>
<div class="t" style="left:1148.35px;top:1177.7px;font-size:19.8px;color:#1d1f24;">1.32</div>
<div class="a" style="left:1325px;top:1165px;width:1px;height:64px;background:#e3e5e8"></div>
<div class="a" style="left:1325px;top:1100px;width:1px;height:65px;background:#e3e5e8"></div>
<div class="t" style="left:1340.3px;top:1113.2px;font-size:19.1px;-webkit-text-stroke:0.85px #1d1f24;color:#1d1f24;">Wed, Mar 13</div>
<svg class="ic" style="left:1463.8px;top:1121.5px" width="12" height="22" viewBox="0 0 12 22"><path d="M1 8.5 L6 2.5 L11 8.5 Z" fill="#bcc0c6"/><path d="M1 13.5 L6 19.5 L11 13.5 Z" fill="#bcc0c6"/></svg>
<div class="t" style="left:1340.3px;top:1177.7px;font-size:19.8px;color:#1d1f24;">1.35</div>
<div class="a" style="left:1517px;top:1165px;width:1px;height:64px;background:#e3e5e8"></div>
<div class="a" style="left:1517px;top:1100px;width:1px;height:65px;background:#e3e5e8"></div>
<div class="t" style="left:1532.25px;top:1113.2px;font-size:19.1px;-webkit-text-stroke:0.85px #1d1f24;color:#1d1f24;">Thu, Mar 14</div>
<svg class="ic" style="left:1649.734375px;top:1121.5px" width="12" height="22" viewBox="0 0 12 22"><path d="M1 8.5 L6 2.5 L11 8.5 Z" fill="#bcc0c6"/><path d="M1 13.5 L6 19.5 L11 13.5 Z" fill="#bcc0c6"/></svg>
<div class="t" style="left:1532.25px;top:1177.7px;font-size:19.8px;color:#1d1f24;">1.37</div>
<div class="a" style="left:1709px;top:1165px;width:1px;height:64px;background:#e3e5e8"></div>
<div class="a" style="left:1709px;top:1100px;width:1px;height:65px;background:#e3e5e8"></div>
<div class="t" style="left:1724.1999999999998px;top:1113.2px;font-size:19.1px;-webkit-text-stroke:0.85px #1d1f24;color:#1d1f24;">Fri, Mar 15</div>
<svg class="ic" style="left:1831.0281249999998px;top:1121.5px" width="12" height="22" viewBox="0 0 12 22"><path d="M1 8.5 L6 2.5 L11 8.5 Z" fill="#bcc0c6"/><path d="M1 13.5 L6 19.5 L11 13.5 Z" fill="#bcc0c6"/></svg>
<div class="t" style="left:1724.1999999999998px;top:1177.7px;font-size:19.8px;color:#1d1f24;">1.32</div>
<div class="a" style="left:1901px;top:1165px;width:1px;height:64px;background:#e3e5e8"></div>
<div class="a" style="left:1901px;top:1100px;width:1px;height:65px;background:#e3e5e8"></div>
<div class="t" style="left:1916.15px;top:1113.2px;font-size:19.1px;-webkit-text-stroke:0.85px #1d1f24;color:#1d1f24;">Sat, Mar 16</div>
<svg class="ic" style="left:2029.4px;top:1121.5px" width="12" height="22" viewBox="0 0 12 22"><path d="M1 8.5 L6 2.5 L11 8.5 Z" fill="#bcc0c6"/><path d="M1 13.5 L6 19.5 L11 13.5 Z" fill="#bcc0c6"/></svg>
<div class="t" style="left:1916.15px;top:1177.7px;font-size:19.8px;color:#1d1f24;">1.41</div>
<div class="a" style="left:2093px;top:1165px;width:1px;height:64px;background:#e3e5e8"></div>
<div class="a" style="left:2093px;top:1100px;width:1px;height:65px;background:#e3e5e8"></div>
<div class="t" style="left:2108.1px;top:1113.2px;font-size:19.1px;-webkit-text-stroke:0.85px #1d1f24;color:#1d1f24;">Sun, Mar 17</div>
<svg class="ic" style="left:2226.6625px;top:1121.5px" width="12" height="22" viewBox="0 0 12 22"><path d="M1 8.5 L6 2.5 L11 8.5 Z" fill="#bcc0c6"/><path d="M1 13.5 L6 19.5 L11 13.5 Z" fill="#bcc0c6"/></svg>
<div class="t" style="left:2108.1px;top:1177.7px;font-size:19.8px;color:#1d1f24;">1.61</div>
<div class="a" style="left:2285px;top:1165px;width:1px;height:64px;background:#e3e5e8"></div>
<div class="a" style="left:2285px;top:1100px;width:1px;height:65px;background:#e3e5e8"></div>
<div class="t" style="left:2300.0499999999997px;top:1113.2px;font-size:19.1px;-webkit-text-stroke:0.85px #1d1f24;color:#1d1f24;">Mon, Mar 18</div>
<svg class="ic" style="left:2421.7843749999997px;top:1121.5px" width="12" height="22" viewBox="0 0 12 22"><path d="M1 8.5 L6 2.5 L11 8.5 Z" fill="#bcc0c6"/><path d="M1 13.5 L6 19.5 L11 13.5 Z" fill="#bcc0c6"/></svg>
<div class="t" style="left:2300.0499999999997px;top:1177.7px;font-size:19.8px;color:#1d1f24;">1.32</div>
<div class="a" style="left:2477px;top:1165px;width:1px;height:64px;background:#e3e5e8"></div>
<div class="a" style="left:2477px;top:1100px;width:1px;height:65px;background:#e3e5e8"></div>
<div class="t" style="left:2492.0px;top:1113.2px;font-size:19.1px;-webkit-text-stroke:0.85px #1d1f24;color:#1d1f24;">Tue, Mar 19</div>
<svg class="ic" style="left:2608.78125px;top:1121.5px" width="12" height="22" viewBox="0 0 12 22"><path d="M1 8.5 L6 2.5 L11 8.5 Z" fill="#bcc0c6"/><path d="M1 13.5 L6 19.5 L11 13.5 Z" fill="#bcc0c6"/></svg>
<div class="t" style="left:2492.0px;top:1177.7px;font-size:19.8px;color:#1d1f24;">1.29</div>
<div class="a" style="left:2669px;top:1100px;width:1px;height:129px;background:#e3e5e8"></div>
<div class="a" style="left:2683.5px;top:1113.5px;width:164.5px;height:38.5px;background:#fff;border:1px solid #dfe1e5;border-radius:6px;box-sizing:border-box;"></div>
<div class="t" style="left:2697.6px;top:1113.2px;font-size:18.55px;color:#1d1f24;">Row Average</div>
<svg class="ic" style="left:2815px;top:1127.25px" width="17" height="10.5" viewBox="0 0 17 10.5"><path d="M2 2 L8.5 8.5 L15 2" fill="none" stroke="#1d1f24" stroke-width="2.2" stroke-linecap="butt"/></svg>
<svg class="ic" style="left:2868px;top:1121.5px" width="12" height="22" viewBox="0 0 12 22"><path d="M1 8.5 L6 2.5 L11 8.5 Z" fill="#bcc0c6"/><path d="M1 13.5 L6 19.5 L11 13.5 Z" fill="#bcc0c6"/></svg>
<div class="t" style="left:2684.4px;top:1177.7px;font-size:20px;color:#1d1f24;">1.38</div>
<div class="a" style="left:691px;top:1101px;width:283px;height:64px;background:#ecf4fe"></div>
<div class="a" style="left:691px;top:1166px;width:283px;height:63px;background:#f5f9fe"></div>
<div class="a" style="left:691px;top:1232px;width:283px;height:28px;background:#fafafa"></div>
<div class="a" style="left:974px;top:1100px;width:1px;height:161px;background:#d5d8dc"></div>
<div class="a" style="left:738px;top:1101px;width:1px;height:128px;background:#e3e5e8"></div>
<div class="a" style="left:970px;top:1122px;width:3px;height:20px;background:#c8cbd0"></div>
<svg class="ic" style="left:701px;top:1120px" width="26" height="26" viewBox="0 0 26 26"><rect x="0" y="0" width="26" height="26" rx="3" fill="#3360e6"/><path d="M4 14.1 L9.9 19.8 L22.2 6.8" fill="none" stroke="#fff" stroke-width="2.3"/></svg>
<svg class="ic" style="left:702px;top:1184.5px" width="25" height="25" viewBox="0 0 25 25"><rect x="0" y="0" width="25" height="25" rx="3" fill="#3360e6"/><path d="M4 14.1 L9.9 19.8 L22.2 6.8" fill="none" stroke="#fff" stroke-width="2.3"/></svg>
<div class="t" style="left:752.2px;top:1113.2px;font-size:19.1px;-webkit-text-stroke:0.85px #1d1f24;color:#1d1f24;">Segment</div>
<svg class="ic" style="left:843px;top:1121.5px" width="12" height="22" viewBox="0 0 12 22"><path d="M1 8.5 L6 2.5 L11 8.5 Z" fill="#bcc0c6"/><path d="M1 13.5 L6 19.5 L11 13.5 Z" fill="#bcc0c6"/></svg>
<div class="t" style="left:753px;top:1177.7px;font-size:19.3px;color:#1d1f24;">United Kingdom</div>
<!--RIGHT-->
</body></html>
